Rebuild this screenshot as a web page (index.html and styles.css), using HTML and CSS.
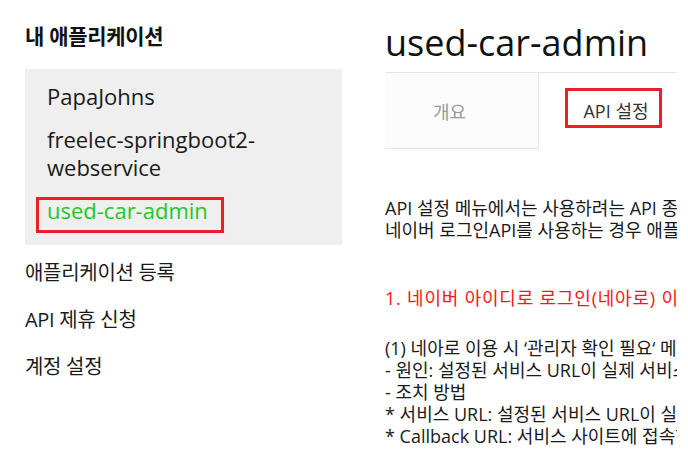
FILE: index.html
```html
<!DOCTYPE html>
<html lang="ko">
<head>
<meta charset="utf-8">
<title>used-car-admin</title>
<link rel="stylesheet" href="styles.css">
</head>
<body>
<div class="page">
  <aside class="sidebar">
    <h2 class="side-title">내 애플리케이션</h2>
    <ul class="app-list">
      <li class="app-item">PapaJohns</li>
      <li class="app-item">freelec-springboot2-<br>webservice</li>
      <li class="app-item active"><span class="mark mark-app">used-car-admin</span></li>
    </ul>
    <ul class="menu">
      <li class="menu-item">애플리케이션 등록</li>
      <li class="menu-item">API 제휴 신청</li>
      <li class="menu-item">계정 설정</li>
    </ul>
  </aside>
  <main class="content">
    <h1 class="app-title">used-car-admin</h1>
    <div class="tabs">
      <div class="tab tab-off">개요</div>
      <div class="tab tab-on"><span class="mark mark-tab">API 설정</span></div>
    </div>
    <div class="body-text">
      <p class="para">API 설정 메뉴에서는 사용하려는 API 종류를 선택하고 설정할 수 있습니다.<br>네이버 로그인API를 사용하는 경우 애플리케이션 정보를 입력해야 합니다.</p>
      <p class="para warn">1. 네이버 아이디로 로그인(네아로) 이용 시 유의사항</p>
      <p class="para">(1) 네아로 이용 시 ‘관리자 확인 필요‘ 메시지가 나오는 경우<br>- 원인: 설정된 서비스 URL이 실제 서비스 URL과 다른 경우<br>- 조치 방법<br>* 서비스 URL: 설정된 서비스 URL이 실제 서비스 URL과 같은지 확인<br>* Callback URL: 서비스 사이트에 접속하여 로그인 후 돌아오는 URL</p>
    </div>
  </main>
</div>
</body>
</html>
```

FILE: styles.css
```css
* { box-sizing: border-box; }
html, body { margin: 0; padding: 0; background: #fff; }
body {
  font-family: "Open Sans", "Noto Sans CJK KR", sans-serif;
  color: #1a1a1a;
  overflow: hidden;
}
ul { list-style: none; margin: 0; padding: 0; }
p, h1, h2 { margin: 0; }

.page {
  display: flex;
  gap: 43px;
  padding-left: 25px;
  height: 460px;
}

.sidebar {
  width: 317px;
  flex: none;
  padding-top: 24px;
}
.side-title {
  font-size: 21px;
  line-height: 24px;
  font-weight: 700;
  color: #111;
  letter-spacing: -0.3px;
  margin-bottom: 21px;
}
.app-list {
  background: #efefef;
  padding: 13px 0 21px 22px;
  display: flex;
  flex-direction: column;
  gap: 15px;
}
.app-item {
  font-size: 22px;
  line-height: 28px;
  color: #1a1a1a;
}
.app-item.active { color: #1ec82c; }

.mark { position: relative; display: inline-block; }
.mark::after {
  content: "";
  position: absolute;
  border: 3px solid #e8202a;
  pointer-events: none;
}
.mark-app::after { top: 1px; bottom: -9px; left: -11px; right: -16px; }

.menu {
  margin-top: 14px;
  display: flex;
  flex-direction: column;
  gap: 19px;
}
.menu-item {
  font-size: 20px;
  line-height: 28px;
  color: #1a1a1a;
  letter-spacing: -0.3px;
}

.content {
  width: 292px;
  flex: none;
  overflow: hidden;
  padding-top: 21px;
}
.app-title {
  font-size: 36px;
  line-height: 44px;
  font-weight: 400;
  color: #111;
  margin-bottom: 7px;
  white-space: nowrap;
}
.tabs {
  display: flex;
  border-top: 1px solid #e5e5e5;
  width: 320px;
}
.tab {
  width: 154px;
  height: 76px;
  display: flex;
  align-items: center;
  font-size: 18px;
  flex: none;
}
.tab-off {
  background: #fcfcfc;
  border-right: 1px solid #e5e5e5;
  border-bottom: 1px solid #e5e5e5;
  color: #999;
  padding-left: 48px;
}
.tab-on {
  justify-content: center;
  color: #333;
}
.mark-tab { line-height: 22px; }
.mark-tab::after { top: -12px; bottom: -6px; left: -18px; right: -13px; }

.body-text {
  margin-top: 48px;
  white-space: nowrap;
}
.para {
  font-size: 18px;
  line-height: 22px;
  color: #1a1a1a;
}
.warn {
  color: #ff1414;
  letter-spacing: 0.8px;
  margin-top: 46px;
  margin-bottom: 28px;
}
```
